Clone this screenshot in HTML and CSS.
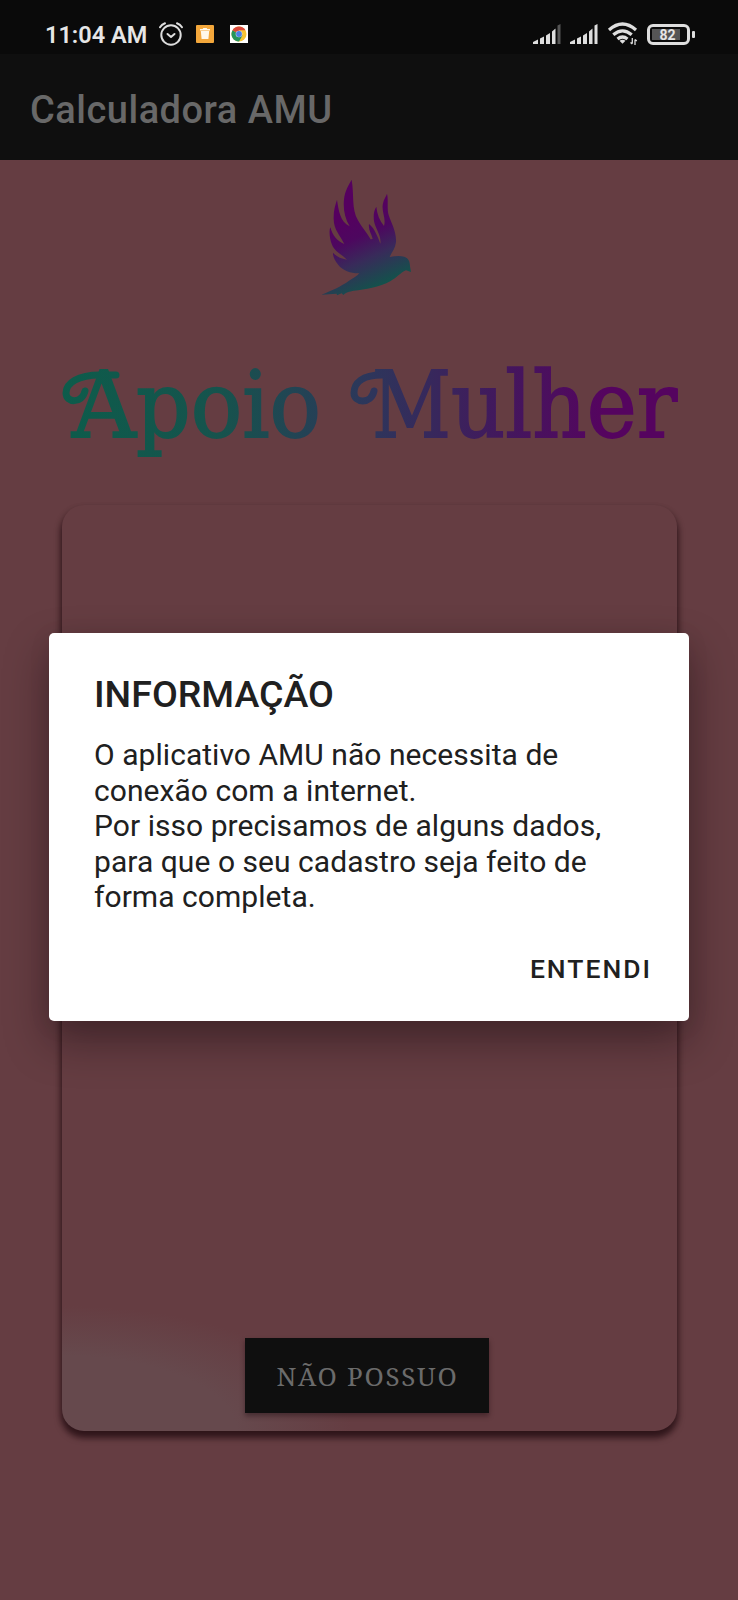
FILE: index.html
```html
<!DOCTYPE html>
<html lang="pt-BR">
<head>
<meta charset="utf-8">
<title>Calculadora AMU</title>
<link rel="stylesheet" href="styles.css">
</head>
<body>
<div class="screen">
  <header class="status">
    <span class="clock">11:04 AM</span>
    <svg class="alarm" viewBox="0 0 24 24" fill="none" stroke="#dedede" stroke-width="2" stroke-linecap="round" stroke-linejoin="round"><circle cx="12" cy="13" r="9.7"/><path d="M8.500 12l3.500 3 3.500-3M1 5.200Q2.700 2.600 6 1.300M23 5.200Q21.300 2.600 18 1.300"/></svg>
    <svg class="trash" viewBox="0 0 18 18"><rect width="18" height="18" rx="1" fill="#f3a73b"/><path d="M4 4h2.700l.6-1h3.400l.6 1H14v1.400H4zM4.800 6h8.400l-.8 8H5.600z" fill="#fff8ea"/></svg>
    <svg class="chrome" viewBox="0 0 18 18"><rect width="18" height="18" fill="#fff"/><circle cx="9" cy="9" r="7.500" fill="#f6c433"/><path d="M9 9L2.500 5.250A7.500 7.500 0 0 0 9 16.500L12.500 10.500z" fill="#27945b"/><path d="M9 9L2.500 5.250A7.500 7.500 0 0 1 15.500 5.250H9z" fill="#d9473a"/><circle cx="9" cy="9" r="3.300" fill="#dfe6f2"/><circle cx="9" cy="9" r="2.900" fill="#4c7fe0"/></svg>
    <span class="spacer"></span>
    <svg class="signal" viewBox="0 0 28 20" fill="#dedede"><path d="M0 20v-2l5-2.500V20zM7 14.500l4-2V20H7zM13 11.500l4-2.500V20h-4zM19 7.500l3.500-3V20H19z"/><path d="M24.500 1.500L27.500 0v20h-3z" fill="#555"/></svg>
    <svg class="signal second" viewBox="0 0 28 20" fill="#dedede"><path d="M0 20v-2l5-2.500V20zM7 14.500l4-2V20H7zM13 11.500l4-2.500V20h-4zM19 7.500l3.500-3V20H19zM24.500 1.500L27.500 0v20h-3z"/></svg>
    <svg class="wifi" viewBox="0 0 30 24" fill="none" stroke="#dedede" stroke-width="3.200"><path d="M1 8Q14.500-4 28 8M5.300 12.800Q14.500 4.800 23.700 12.800M9.500 17Q14.500 13 19.500 17"/><path d="M11.500 18.700q3-2 6 0l-3 3z" fill="#dedede" stroke="none"/><path d="M24.300 16v5.500M27 17.500V23M22.500 20.500l1.800 1.500M27 17.500l1.800 1.500" stroke-width="1.300"/></svg>
    <div class="battery"><span>82</span></div>
    <span class="battery-tip"></span>
  </header>
  <div class="appbar"><h1>Calculadora AMU</h1></div>
  <main class="page">
    <svg class="bird" viewBox="0 0 390 435">
      <defs><linearGradient id="wing" gradientUnits="userSpaceOnUse" x1="150" y1="150" x2="245" y2="365"><stop offset="0" stop-color="#55005f"/><stop offset=".3" stop-color="#4d075f"/><stop offset=".6" stop-color="#382b5a"/><stop offset="1" stop-color="#11544b"/></linearGradient></defs>
      <path fill="url(#wing)" d="M155 44C163 90 154 131 174 166C184 185 200 203 212 223L218 222C215 207 204 194 207 177C221 188 227 203 233 216C237 224 239 231 241 236C245 214 227 193 222 169C220 152 221 137 229 125C231 147 239 167 252 183C259 161 243 138 249 115C251 102 259 94 261 86C266 104 260 131 266 150C275 177 290 201 288 232C286 250 275 263 269 276C284 273 301 272 313 275C326 280 330 290 330 304L333 321L318 316C300 324 291 338 272 348C238 367 195 373 162 377C149 380 136 382 130 390L125 385L111 391L110 386L64 389C96 376 122 365 147 347C160 340 171 333 178 325C155 326 128 317 115 300C105 288 98 274 99 263C109 275 123 281 141 284C125 268 103 258 96 239C88 219 87 198 91 187C97 210 111 229 133 237C121 212 101 194 101 162C100 137 106 120 111 104C116 137 120 169 149 184C134 160 129 131 132 103C135 76 146 60 155 44Z"/>
    </svg>
    <svg class="wordmark" viewBox="0 0 618 100">
      <defs><linearGradient id="brand" gradientUnits="userSpaceOnUse" x1="0" y1="0" x2="618" y2="0"><stop offset="0" stop-color="#0d5c4b"/><stop offset=".26" stop-color="#16534d"/><stop offset=".5" stop-color="#2d365b"/><stop offset=".72" stop-color="#43175d"/><stop offset=".88" stop-color="#55045f"/><stop offset="1" stop-color="#55045f"/></linearGradient></defs>
      <g class="letters" fill="url(#brand)" stroke="url(#brand)">
        <text y="77"><tspan x="12" textLength="64" lengthAdjust="spacingAndGlyphs">A</tspan><tspan x="76" textLength="185" lengthAdjust="spacingAndGlyphs">poio</tspan> <tspan x="312" textLength="79" lengthAdjust="spacingAndGlyphs">M</tspan><tspan x="391" textLength="226" lengthAdjust="spacingAndGlyphs">ulher</tspan></text>
      </g>
      <g class="swash" stroke="url(#brand)"><path d="M56 15H40C18 15 6 23 6 33C6 43 22 44 25 31"/><path d="M328 15H322C302 15 294 23 294 33C294 43 311 45 314 31"/></g>
    </svg>
    <section class="card"><button class="no">NÃO POSSUO</button></section>
  </main>
  <section class="dialog" role="dialog">
    <h2>INFORMAÇÃO</h2>
    <p>O aplicativo AMU não necessita de<br>conexão com a internet.<br>Por isso precisamos de alguns dados,<br>para que o seu cadastro seja feito de<br>forma completa.</p>
    <button class="ok">ENTENDI</button>
  </section>
</div>
</body>
</html>
```
FILE: styles.css
```css
* { box-sizing: border-box; }
body { margin: 0; background: #653d42; font-family: Roboto, sans-serif; }
h1, h2, p { margin: 0; font-weight: 500; }
button { border: 0; margin: 0; padding: 0; }
svg { display: block; flex: none; overflow: visible; }
.screen { position: relative; width: 738px; height: 1600px; overflow: hidden; display: flex; flex-direction: column; }
.status { height: 54px; background: #0a0a0a; display: flex; align-items: center; padding: 14px 43px 0 45px; color: #e6e6e6; }
.clock { width: 114px; padding-top: 1px; font-size: 23.5px; line-height: 28px; font-weight: 600; white-space: nowrap; }
.alarm { width: 24px; height: 24px; }
.trash { width: 18px; height: 18px; margin-left: 13px; }
.chrome { width: 18px; height: 18px; margin-left: 16px; }
.spacer { flex: 1; }
.signal { width: 28px; height: 20px; }
.second { margin-left: 9px; }
.wifi { width: 30px; height: 24px; margin-left: 10px; }
.battery { width: 43px; height: 21px; margin-left: 9px; border: 3px solid #dedede; border-radius: 6px; background: linear-gradient(90deg, #555 99%, #111 99%) 2px 2px / 28px 11px no-repeat; text-align: center; font-size: 14px; line-height: 16px; font-weight: 700; }
.battery span { position: relative; left: -1px; }
.battery-tip { width: 3px; height: 7px; margin-left: 2px; background: #dedede; border-radius: 1px; }
.appbar { height: 106px; background: #0f0f0f; padding: 33px 30px; }
.appbar h1 { font-size: 38px; line-height: 46px; color: #686868; letter-spacing: .5px; }
.page { flex: 1; display: flex; flex-direction: column; align-items: center; background: #653d42; padding-top: 5px; }
.bird { width: 130px; height: 145px; margin-right: 8px; }
.wordmark { width: 618px; height: 100px; margin-top: 50px; }
.wordmark text { font-family: "DejaVu Serif", serif; font-size: 91px; }
.letters { stroke-width: 1.8px; }
.swash { fill: none; stroke-width: 7; stroke-linecap: round; }
.card { width: 615px; height: 926px; margin-top: 45px; border-radius: 22px; display: flex; flex-direction: column; justify-content: flex-end; align-items: center; padding: 0 5px 18px 0; background: radial-gradient(ellipse 290px 125px at 0 100%, #66494d 0 60%, #653d42 100%) #653d42; box-shadow: 0 6px 6px 1px rgba(25,5,10,.6), 0 4px 6px rgba(25,5,10,.3); }
.no { width: 244px; height: 75px; background: #0f0f0f; color: #6b6b6b; font-family: "Noto Serif", "Liberation Serif", serif; font-size: 26px; letter-spacing: 1.7px; padding-left: 2px; box-shadow: 0 3px 5px rgba(20,5,10,.4); }
.dialog { position: absolute; left: 49px; top: 633px; width: 640px; height: 388px; border-radius: 5px; background: #fff; color: #202020; padding: 38px 37px 0 45px; display: flex; flex-direction: column; box-shadow: 0 20px 44px rgba(20,8,12,.42), 0 4px 22px rgba(20,8,12,.08); }
.dialog h2 { font-size: 37.5px; line-height: 46px; }
.dialog p { margin-top: 20px; font-size: 30px; line-height: 35.6px; font-weight: 400; white-space: nowrap; letter-spacing: .05px; }
.ok { align-self: flex-end; margin-top: 37px; background: none; color: #202020; font: 500 26.5px/34px Roboto, sans-serif; letter-spacing: 2px; }
```
